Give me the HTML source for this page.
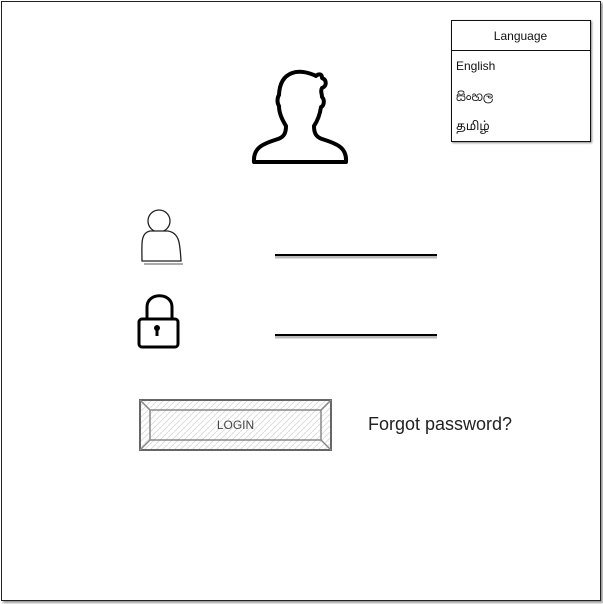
<!DOCTYPE html>
<html><head><meta charset="utf-8"><style>
body{margin:0;width:603px;height:604px;background:#fff;position:relative;overflow:hidden;font-family:"Liberation Sans",sans-serif}
.abs{position:absolute}
</style></head><body>
<div class="abs" style="left:1px;top:1px;width:598px;height:598px;border:1px solid #222;box-shadow:2px 2px 2px #999"></div>
<div class="abs" style="left:451px;top:20px;width:138px;height:120px;border:1px solid #111;box-shadow:1px 1px 2px #888"></div>
<div class="abs" style="left:451px;top:50px;width:139px;border-top:1px solid #111"></div>
<div class="abs" style="left:451px;top:29px;width:139px;text-align:center;font-size:12px;color:#111">Language</div>
<div class="abs" style="left:456px;top:59px;font-size:12px;color:#111">English</div>
<div class="abs" style="left:456px;top:89px;font-size:12px;color:#111;font-family:'Liberation Sans','Noto Sans Sinhala',sans-serif">සිංහල</div>
<div class="abs" style="left:456px;top:119px;font-size:12px;color:#111;font-family:'Liberation Sans','Noto Sans Tamil',sans-serif">தமிழ்</div>
<svg class="abs" style="left:0;top:0" width="603" height="604">
<path d="M254,162 L346,162 C347,148 338,144 322,139 C316,137 314,133 314,126 C318,120 320,114 321,107 C324,106 325,100 322,97 C322,93 320,91 322,88 C327,86 327,80 322,78 C322,73 318,74 316,76 C300,68 280,70 279,95 C277,98 277,103 279,106 C279,114 283,121 286,126 C286,133 284,137 278,139 C262,144 253,148 254,162 Z" fill="none" stroke="#000" stroke-width="4" stroke-linejoin="round"/>
<circle cx="159" cy="221" r="11" fill="none" stroke="#222" stroke-width="1.3"/>
<path d="M142,261 C142,245 140,233 150,231 L168,231 C180,233 180,245 181,261 Z" fill="#fff" stroke="#222" stroke-width="1.3"/>
<path d="M144,264 L183,264" stroke="#aaa" stroke-width="2"/>
<path d="M147,320 L147,307 C147,292 172,292 172,307 L172,320" fill="none" stroke="#000" stroke-width="3"/>
<rect x="139" y="319" width="39" height="28" rx="3" fill="none" stroke="#000" stroke-width="3"/>
<circle cx="157" cy="328" r="3" fill="#000"/><rect x="155.5" y="329" width="3" height="7" fill="#000"/>
<line x1="275" y1="257" x2="437" y2="257" stroke="#bbb" stroke-width="3"/>
<line x1="275" y1="255" x2="437" y2="255" stroke="#000" stroke-width="2"/>
<line x1="275" y1="337" x2="437" y2="337" stroke="#bbb" stroke-width="3"/>
<line x1="275" y1="335" x2="437" y2="335" stroke="#000" stroke-width="2"/>
<defs><pattern id="h" width="6" height="6" patternUnits="userSpaceOnUse"><path d="M0,6 L6,0" stroke="#ddd" stroke-width="1"/></pattern></defs>
<rect x="140" y="400" width="191" height="50" fill="url(#h)" stroke="#666" stroke-width="2"/>
<path d="M140,400 L150,410 L321,410 L331,400 M150,410 L150,440 L140,450 M321,410 L321,440 L331,450 M150,440 L321,440" fill="none" stroke="#888" stroke-width="1.5"/>
</svg>
<div class="abs" style="left:140px;top:418px;width:191px;text-align:center;font-size:12px;color:#444">LOGIN</div>
<div class="abs" style="left:368px;top:414px;font-size:18px;color:#222">Forgot password?</div>
</body></html>
